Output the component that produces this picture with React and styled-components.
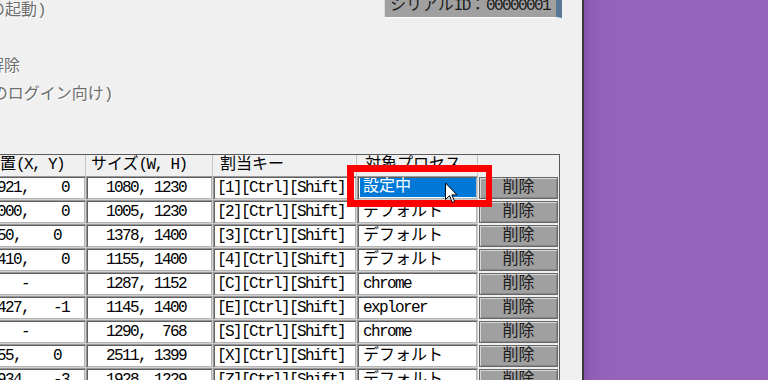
import styled, { createGlobalStyle } from "styled-components"

const rows = [
    { pos: "-1921,    0", size: "1080, 1230", key: "1", proc: "設定中", jp: true, selected: true },
    { pos: "-2000,    0", size: "1005, 1230", key: "2", proc: "デフォルト", jp: true },
    { pos: "-650,    0", size: "1378, 1400", key: "3", proc: "デフォルト", jp: true },
    { pos: "-1410,    0", size: "1155, 1400", key: "4", proc: "デフォルト", jp: true },
    { pos: "     -", size: "1287, 1152", key: "C", proc: "chrome" },
    { pos: "-1427,   -1", size: "1145, 1400", key: "E", proc: "explorer" },
    { pos: "     -", size: "1290,  768", key: "S", proc: "chrome" },
    { pos: "-255,    0", size: "2511, 1399", key: "X", proc: "デフォルト", jp: true },
    { pos: "-1934,   -3", size: "1928, 1229", key: "Z", proc: "デフォルト", jp: true },
]

export default function App(){
    return (
        <>
            <GlobalStyle />
            <Screen>
                <Window>
                    <Content>
                        <TopArea>
                            <Options>
                                <Option shift={-86}>（ログオン時の起動)</Option>
                                <Option shift={0}></Option>
                                <Option shift={-39}>ロック解除</Option>
                                <Option shift={-67}>（全ユーザのログイン向け)</Option>
                            </Options>
                            <Serial><Jp>シリアル</Jp>ID<Jp>：</Jp>00000001</Serial>
                        </TopArea>

                        <Grid>
                            <HeadCell pad={5}><Jp>位置</Jp>(X, Y)</HeadCell>
                            <HeadCell pad={5}><Jp>サイズ</Jp>(W, H)</HeadCell>
                            <HeadCell pad={7}><Jp>割当キー</Jp></HeadCell>
                            <HeadCell pad={8}><Jp>対象プロセス</Jp></HeadCell>
                            <HeadCell last />

                            {rows.map((r, i) => (
                                <Row key={i}>
                                    <Field pad={1}>{r.pos}</Field>
                                    <Field pad={19}>{r.size}</Field>
                                    <Field pad={3}>[{r.key}][Ctrl][Shift]</Field>
                                    {r.selected
                                        ? <Field pad={0}><Selection>{r.proc}</Selection></Field>
                                        : <Field pad={5} jp={r.jp}>{r.proc}</Field>}
                                    <DeleteButton>削除</DeleteButton>
                                </Row>
                            ))}
                        </Grid>
                    </Content>

                    <Highlight />
                    <Cursor viewBox="0 0 13 21" width="13" height="22">
                        <path d="M0.5 0.5 L0.5 17 L4.5 13.2 L7.4 20 L9.6 19 L6.8 12.4 L12 12.4 Z"
                              fill="#fff" stroke="#000" strokeWidth="1" strokeLinejoin="miter" />
                    </Cursor>
                </Window>
                <Desktop />
            </Screen>
        </>
    )
}

const GlobalStyle = createGlobalStyle`
    html, body{
        margin: 0;
        height: 100%;
        overflow: hidden;
    }
    body{
        font-family: "Liberation Mono", "Noto Sans CJK JP", monospace;
        font-size: 16px;
        letter-spacing: -1.6px;
        color: #000;
    }
`

const Screen = styled.div`
    display: flex;
    width: 768px;
    height: 380px;
`

const Window = styled.div`
    position: relative;
    flex: none;
    width: 582px;
    height: 100%;
    background: #f0f0f0;
    border-right: 2px solid #3a3a3a;
    overflow: hidden;
`

const Desktop = styled.div`
    flex: 1;
    background: linear-gradient(90deg, #8253a8 0px, #8d5eb4 6px, #9262b9 18px, #9565bc 40px);
`

const Content = styled.div`
    display: flex;
    flex-direction: column;
    margin-left: -21px;
`

const TopArea = styled.div`
    display: flex;
    align-items: flex-start;
    height: 154px;
`

const Options = styled.div`
    flex: 1;
    display: flex;
    flex-direction: column;
    margin-top: -3px;
`

const Option = styled.div`
    height: 28px;
    line-height: 28px;
    margin-left: ${p => p.shift}px;
    white-space: nowrap;
    letter-spacing: 0;
    color: #6d6d6d;
    text-shadow: 1px 1px 0 #ffffff;
`

const Jp = styled.span`
    letter-spacing: 0;
`

const Serial = styled.div`
    box-sizing: border-box;
    width: 178px;
    height: 24px;
    margin: -6px 20px 0 auto;
    padding: 4px 0 0 5px;
    background: #a0a0a0;
    border-left: 1px solid #dcdcdc;
    border-right: 6px solid #5a7896;
    border-bottom: 1px solid #ffffff;
    line-height: 16px;
    color: #1c1c1c;
    white-space: nowrap;
    overflow: hidden;
`

const Grid = styled.div`
    display: grid;
    grid-template-columns: 107px 127px 144px 121px 81px;
    grid-template-rows: 21px;
    grid-auto-rows: 24px;
    width: 580px;
    border-top: 1px solid #5a5a5a;
    border-right: 1px solid #5a5a5a;
`

const Row = styled.div`
    display: contents;
`

const HeadCell = styled.div`
    box-sizing: border-box;
    padding-left: ${p => p.pad || 0}px;
    border-right: ${p => p.last ? "none" : "1px solid #c4c4c4"};
    line-height: 21px;
    white-space: nowrap;
    overflow: hidden;
`

const Field = styled.div`
    box-sizing: border-box;
    height: 24px;
    padding: 1px 0 0 ${p => p.pad}px;
    background: #ffffff;
    border: 1px solid;
    border-color: #9a9a9a #d2d2d2 #d2d2d2 #9a9a9a;
    box-shadow: inset 1px 1px 0 #5f5f5f, inset -1px -1px 0 #b4b4b4;
    line-height: 20px;
    white-space: pre;
    overflow: hidden;
    letter-spacing: ${p => p.jp ? "0" : "-1.6px"};
`

const Selection = styled.div`
    height: 19px;
    margin: 0 1px 0 2px;
    padding-left: 3px;
    background: #0078d7;
    color: #ffffff;
    line-height: 19px;
    letter-spacing: 0;
`

const DeleteButton = styled.button`
    box-sizing: border-box;
    height: 22px;
    margin: 1px;
    padding: 0;
    font: inherit;
    letter-spacing: 0;
    color: #1a1a1a;
    background: #a0a0a0;
    border: 1px solid #666666;
    box-shadow: inset 1px 1px 0 #d8d8d8, inset -1px -1px 0 #888888;
    line-height: 20px;
`

const Highlight = styled.div`
    position: absolute;
    left: 347px;
    top: 165px;
    box-sizing: border-box;
    width: 145px;
    height: 42px;
    border: 7px solid #ff0000;
    border-right-width: 6px;
    pointer-events: none;
`

const Cursor = styled.svg`
    position: absolute;
    left: 445px;
    top: 182px;
    overflow: visible;
`
